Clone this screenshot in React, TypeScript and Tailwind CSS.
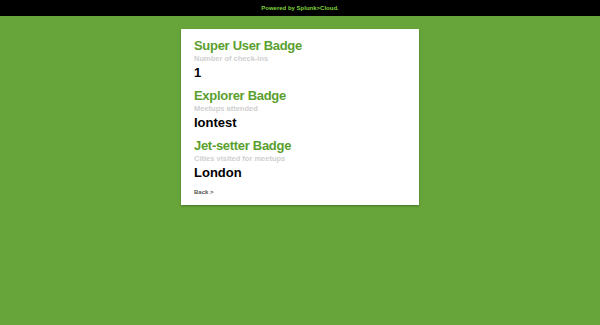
export default function App() {
  const items = [
    { title: "Super User Badge", sub: "Number of check-ins", value: "1" },
    { title: "Explorer Badge", sub: "Meetups attended", value: "Iontest" },
    { title: "Jet-setter Badge", sub: "Cities visited for meetups", value: "London" },
  ];
  return (
    <div className="w-[600px] h-[325px] bg-[#67a53a] flex flex-col" style={{ fontFamily: '"Liberation Sans", Arial, sans-serif' }}>
      <div className="h-[16px] bg-black flex items-center justify-center">
        <span className="text-[6px] font-bold text-[#7fd13b]">Powered by Splunk&gt;Cloud.</span>
      </div>
      <div className="flex justify-center pt-[13px]">
        <div className="w-[238px] bg-white shadow-[0_1px_2px_rgba(0,0,0,0.3)] px-[13px] pt-[8px] pb-[8px]">
          {items.map((it) => (
            <div key={it.title} className="mb-[6px]">
              <div className="text-[13px] font-bold text-[#5a9f2e] leading-[17px] tracking-[-0.3px]">{it.title}</div>
              <div className="text-[7.5px] font-bold text-[#cfcfcf] leading-[10px]">{it.sub}</div>
              <div className="text-[13px] font-bold text-black leading-[16px] mt-[1px]">{it.value}</div>
            </div>
          ))}
          <div className="text-[6px] font-bold text-[#555] leading-[10px] mt-[1px]">Back &gt;</div>
        </div>
      </div>
    </div>
  );
}
